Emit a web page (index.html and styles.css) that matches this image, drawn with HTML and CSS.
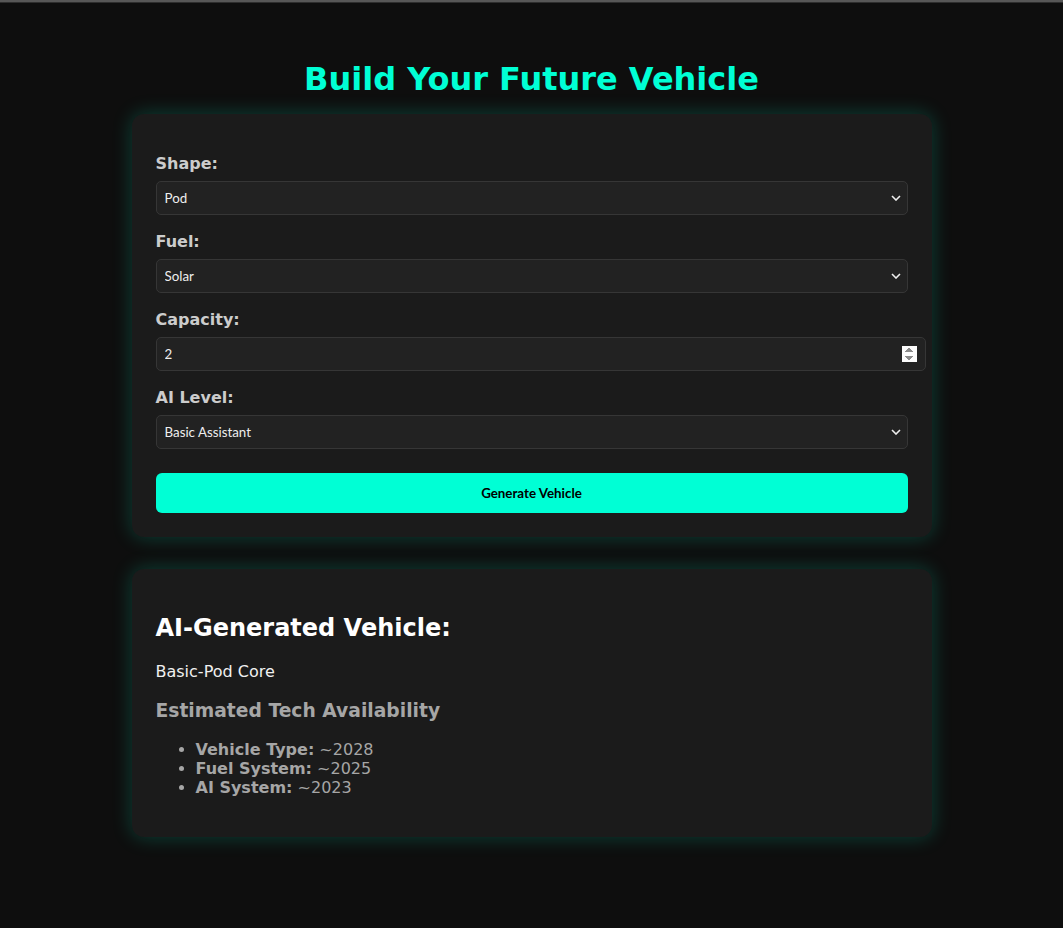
FILE: index.html
```html
<!DOCTYPE html>
<html lang="en">
<head>
  <meta charset="UTF-8">
  <title>Future Vehicle Builder</title>
  <link rel="stylesheet" href="styles.css">
</head>
<body>
  <div class="topbar"></div>

  <div class="page">
    <h1>Build Your Future Vehicle</h1>

    <div class="card">
      <form id="vehicleForm">
        <label for="shape">Shape:</label>
        <select id="shape">
          <option>Pod</option>
          <option>Sedan</option>
          <option>Hovercraft</option>
        </select>

        <label for="fuel">Fuel:</label>
        <select id="fuel">
          <option>Solar</option>
          <option>Hydrogen</option>
          <option>Electric</option>
        </select>

        <label for="capacity">Capacity:</label>
        <input type="number" id="capacity" value="2" min="1">

        <label for="ai">AI Level:</label>
        <select id="ai">
          <option>Basic Assistant</option>
          <option>Autonomous</option>
          <option>Sentient</option>
        </select>

        <button type="button" class="generate-btn">Generate Vehicle</button>
      </form>
    </div>

    <div class="card result">
      <h2>AI-Generated Vehicle:</h2>
      <p>Basic-Pod Core</p>
      <h3>Estimated Tech Availability</h3>
      <ul>
        <li><strong>Vehicle Type:</strong> ~2028</li>
        <li><strong>Fuel System:</strong> ~2025</li>
        <li><strong>AI System:</strong> ~2023</li>
      </ul>
    </div>
  </div>
</body>
</html>
```

FILE: styles.css
```css
body {
  font-family: "DejaVu Sans", Verdana, sans-serif;
  margin: 0;
  background-color: #0e0e0e;
  color: #eee;
}

.topbar {
  height: 2px;
  background-color: #575757;
  border-bottom: 1px solid #2e2e2e;
}

.page {
  padding: 57px 20px 40px;
}

h1 {
  text-align: center;
  color: #00ffd5;
  font-size: 32px;
  margin: 0 0 15.5px;
}

.card {
  box-sizing: border-box;
  max-width: 800px;
  margin: 0 auto 32px;
  background-color: #1b1b1b;
  padding: 23px 24px 24px;
  border-radius: 12px;
  box-shadow: 0 0 20px rgba(0, 255, 204, 0.22);
}

label {
  display: block;
  margin: 17px 0 8px;
  line-height: 19px;
  font-weight: bold;
  color: #ccc;
}

select, input, .generate-btn {
  font-family: Lato, "Liberation Sans", sans-serif;
  font-size: 13.33px;
}

select, input {
  width: 100%;
  padding: 8px;
  line-height: 16px;
  background-color: #222;
  color: #eee;
  border: 1px solid #363636;
  border-radius: 5px;
}

select {
  box-sizing: border-box;
  height: 34px;
  appearance: none;
  background-image: url("data:image/svg+xml,%3Csvg xmlns='http://www.w3.org/2000/svg' width='10' height='6' viewBox='0 0 10 6'%3E%3Cpath d='M1 1l4 4 4-4' fill='none' stroke='%23eee' stroke-width='1.6'/%3E%3C/svg%3E");
  background-repeat: no-repeat;
  background-position: right 6px center;
}

input[type=number]::-webkit-inner-spin-button {
  opacity: 1;
}

.generate-btn {
  display: block;
  width: 100%;
  margin-top: 24px;
  padding: 12px;
  line-height: 16px;
  background-color: #00ffd5;
  color: #000;
  font-weight: bold;
  border: none;
  border-radius: 6px;
  cursor: pointer;
}

.generate-btn:hover {
  background-color: #00e0bb;
}

.result {
  padding: 26px 24px 24px;
}

.result h2 {
  color: #fff;
}

.result p {
  color: #f0f0f0;
}

.result h3 {
  color: #a6a6a6;
}

.result ul {
  color: #a6a6a6;
  margin-bottom: 16px;
}
```
